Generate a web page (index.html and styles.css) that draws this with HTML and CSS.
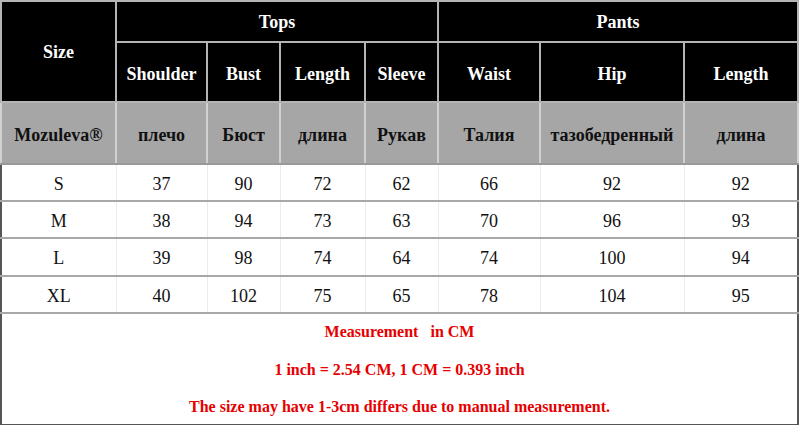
FILE: index.html
```html
<!DOCTYPE html>
<html>
<head>
<meta charset="utf-8">
<link rel="stylesheet" href="styles.css">
</head>
<body>
<table class="size-table">
  <colgroup>
    <col class="c-size">
    <col class="c-shoulder">
    <col class="c-bust">
    <col class="c-length">
    <col class="c-sleeve">
    <col class="c-waist">
    <col class="c-hip">
    <col class="c-plength">
  </colgroup>
  <thead>
    <tr class="row-group">
      <th rowspan="2">Size</th>
      <th colspan="4">Tops</th>
      <th colspan="3">Pants</th>
    </tr>
    <tr class="row-names">
      <th>Shoulder</th>
      <th>Bust</th>
      <th>Length</th>
      <th>Sleeve</th>
      <th>Waist</th>
      <th>Hip</th>
      <th>Length</th>
    </tr>
    <tr class="row-ru">
      <th>Mozuleva®</th>
      <th>плечо</th>
      <th>Бюст</th>
      <th>длина</th>
      <th>Рукав</th>
      <th>Талия</th>
      <th>тазобедренный</th>
      <th>длина</th>
    </tr>
  </thead>
  <tbody>
    <tr class="row-data r1"><td>S</td><td>37</td><td>90</td><td>72</td><td>62</td><td>66</td><td>92</td><td>92</td></tr>
    <tr class="row-data r2"><td>M</td><td>38</td><td>94</td><td>73</td><td>63</td><td>70</td><td>96</td><td>93</td></tr>
    <tr class="row-data r3"><td>L</td><td>39</td><td>98</td><td>74</td><td>64</td><td>74</td><td>100</td><td>94</td></tr>
    <tr class="row-data r4"><td>XL</td><td>40</td><td>102</td><td>75</td><td>65</td><td>78</td><td>104</td><td>95</td></tr>
    <tr class="row-note">
      <td colspan="8">
        <div class="note">
          <p>Measurement&nbsp;&nbsp; in CM</p>
          <p>1 inch = 2.54 CM, 1 CM = 0.393 inch</p>
          <p>The size may have 1-3cm differs due to manual measurement.</p>
        </div>
      </td>
    </tr>
  </tbody>
</table>
</body>
</html>
```

FILE: styles.css
```css
html, body {
  margin: 0;
  padding: 0;
  background: #fff;
}

.size-table {
  width: 799px;
  table-layout: fixed;
  border-collapse: collapse;
  border: 2px solid #555;
  font-family: "Liberation Serif", "Times New Roman", serif;
  font-size: 18px;
  color: #111;
}

.c-size { width: 115px; }
.c-shoulder { width: 91px; }
.c-bust { width: 73px; }
.c-length { width: 85px; }
.c-sleeve { width: 73px; }
.c-waist { width: 102px; }
.c-hip { width: 144px; }
.c-plength { width: 114px; }

.size-table th,
.size-table td {
  padding: 0;
  text-align: center;
  vertical-align: middle;
  white-space: nowrap;
}

.size-table thead th {
  font-weight: bold;
  background: #000;
  color: #fff;
  border: 2px solid #b4b4b4;
  padding-top: 2px;
}

.row-group { height: 41px; }
.row-names { height: 60px; }

.size-table .row-names th {
  padding-top: 4px;
}

.size-table .row-ru th {
  background: #a6a6a6;
  color: #111;
  border-left: 2px solid #d0d0d0;
  border-right: 2px solid #d0d0d0;
  border-bottom: 2px solid #999;
  padding-top: 4px;
}

.row-ru { height: 62px; }

.row-data { height: 37px; }
.row-data.r3 { height: 38px; }

.row-data td {
  border-left: 1px solid #ececec;
  border-right: 1px solid #ececec;
  border-bottom: 2px solid #a8a8a8;
  padding-top: 3px;
}

.row-note td {
  vertical-align: top;
  color: #e60000;
  font-weight: bold;
  font-size: 16px;
  border-bottom: 2px solid #555;
}

.note {
  height: 111px;
}

.row-note p {
  margin: 0;
  line-height: 37.5px;
}

.row-note p:first-child {
  margin-top: -1px;
}
```
